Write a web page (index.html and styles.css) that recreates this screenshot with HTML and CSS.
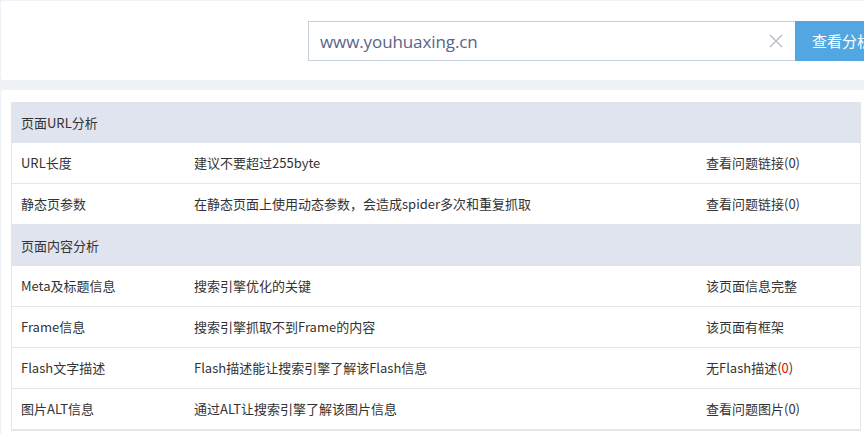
FILE: index.html
```html
<!DOCTYPE html>
<html lang="zh-CN">
<head>
<meta charset="utf-8">
<title>页面分析</title>
<link rel="stylesheet" href="styles.css">
</head>
<body>
<div class="top-panel">
  <div class="search">
    <div class="search-input">
      <span class="search-text">www.youhuaxing.cn</span>
      <svg class="clear" width="14" height="14" viewBox="0 0 14 14"><path d="M1 1 L13 13 M13 1 L1 13" stroke="#b4b8bf" stroke-width="1.2" fill="none"/></svg>
    </div>
    <div class="search-btn">查看分析</div>
  </div>
</div>
<div class="main-panel">
  <div class="table">
    <div class="section">页面URL分析</div>
    <div class="row"><div class="cell">URL长度</div><div class="cell">建议不要超过255byte</div><div class="cell">查看问题链接(0)</div></div>
    <div class="row"><div class="cell">静态页参数</div><div class="cell">在静态页面上使用动态参数，会造成spider多次和重复抓取</div><div class="cell">查看问题链接(0)</div></div>
    <div class="section">页面内容分析</div>
    <div class="row"><div class="cell">Meta及标题信息</div><div class="cell">搜索引擎优化的关键</div><div class="cell">该页面信息完整</div></div>
    <div class="row"><div class="cell">Frame信息</div><div class="cell">搜索引擎抓取不到Frame的内容</div><div class="cell">该页面有框架</div></div>
    <div class="row"><div class="cell">Flash文字描述</div><div class="cell">Flash描述能让搜索引擎了解该Flash信息</div><div class="cell">无Flash描述(<span class="red">0</span>)</div></div>
    <div class="row"><div class="cell">图片ALT信息</div><div class="cell">通过ALT让搜索引擎了解该图片信息</div><div class="cell">查看问题图片(0)</div></div>
  </div>
</div>
</body>
</html>
```

FILE: styles.css
```css
html, body {
  margin: 0;
  padding: 0;
}
body {
  background: #eef2f7;
  font-family: "Noto Sans CJK SC", "Noto Sans", sans-serif;
  color: #333;
  font-size: 13px;
  overflow: hidden;
  width: 864px;
  height: 434px;
}
.top-panel {
  margin: 1px 0 0 1px;
  height: 79px;
  background: #fff;
  border-radius: 3px 0 0 3px;
  display: flex;
  align-items: flex-start;
}
.search {
  margin: 20px 0 0 307px;
  display: flex;
  height: 40px;
}
.search-input {
  height: 38px;
  border: 1px solid #c6cfdc;
  border-right: none;
  display: flex;
  align-items: center;
  justify-content: space-between;
  padding: 0 12px 0 11px;
  box-sizing: content-box;
  width: 463px;
}
.search-text {
  font-family: "Open Sans", "Noto Sans", sans-serif;
  font-size: 17px;
  color: #56658a;
  letter-spacing: -0.1px;
}
.clear {
  display: block;
}
.search-btn {
  width: 70px;
  height: 40px;
  background: #52a6e1;
  color: #fff;
  font-size: 15px;
  line-height: 40px;
  padding-left: 17px;
  box-sizing: border-box;
  white-space: nowrap;
  overflow: hidden;
}
.main-panel {
  margin: 10px 0 0 1px;
  background: #fff;
  padding: 12px 0 0 10px;
  height: 332px;
  border-top-left-radius: 3px;
}
.table {
  width: 848px;
  border: 1px solid #e4e6ea;
  border-top: none;
}
.section {
  height: 41px;
  line-height: 41px;
  background: #e0e4ee;
  padding-left: 9px;
  color: #333;
}
.row {
  display: grid;
  grid-template-columns: 173px 512px 1fr;
  height: 40px;
  border-bottom: 1px solid #e4e6ea;
}
.cell {
  line-height: 40px;
  padding-left: 9px;
  white-space: nowrap;
  overflow: hidden;
}
.red {
  color: #ff0000;
}
```
